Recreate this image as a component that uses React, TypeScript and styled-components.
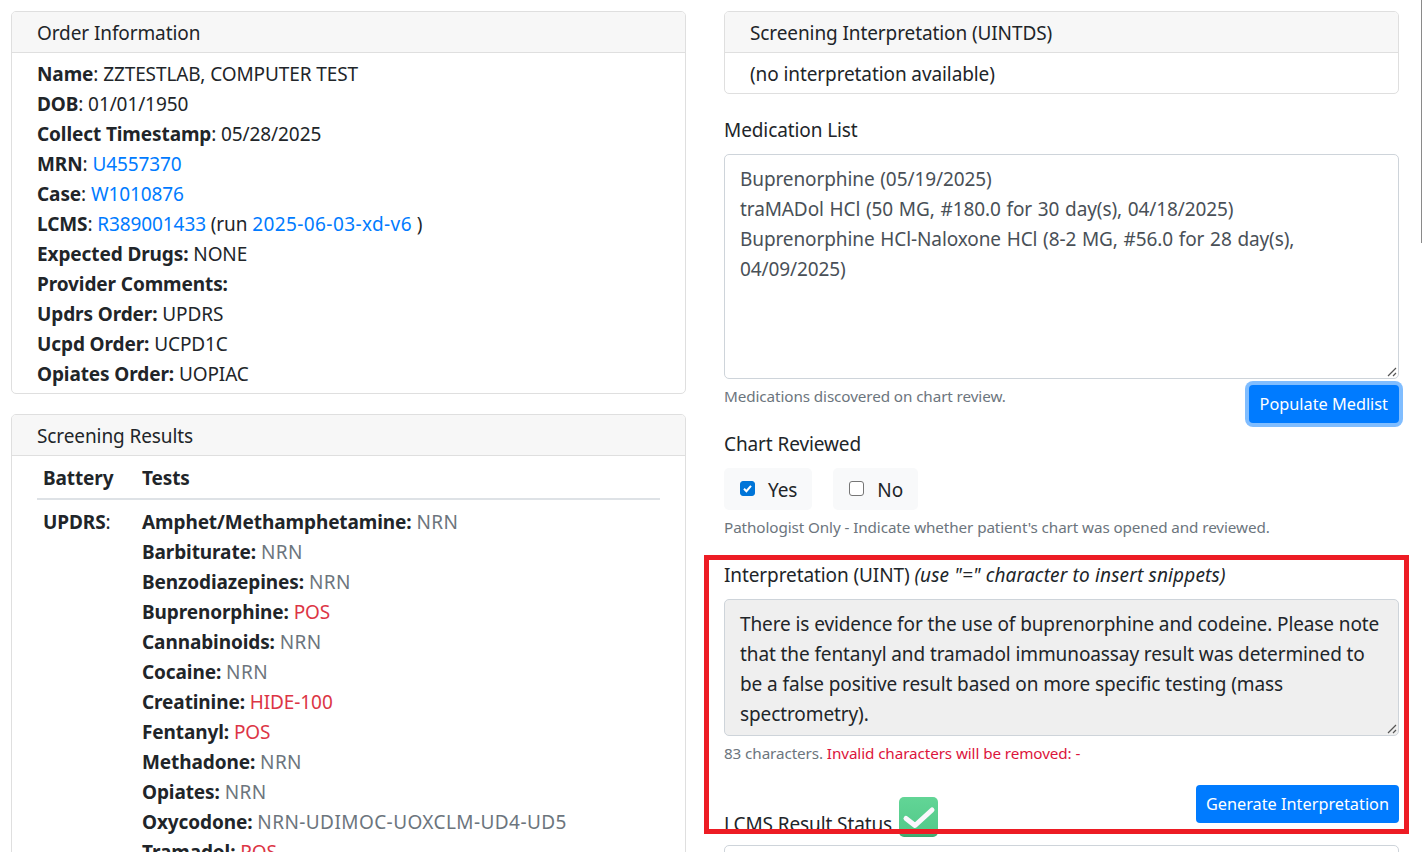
import React from 'react';
import styled, { createGlobalStyle } from 'styled-components';

const GlobalStyle = createGlobalStyle`
  html, body {
    margin: 0;
    height: 852px;
    overflow: hidden;
    background: #fff;
  }
  body {
    font-family: "Noto Sans", "Open Sans", sans-serif;
    font-size: 19px;
    line-height: 30px;
    letter-spacing: -0.1px;
    color: #212529;
  }
  * { box-sizing: border-box; }
`;

const Page = styled.div`
  display: grid;
  grid-template-columns: 675px 675px;
  column-gap: 38px;
  padding: 11px 0 0 11px;
  height: 852px;
  overflow: hidden;
`;

const Column = styled.div`
  display: flex;
  flex-direction: column;
`;

const Card = styled.section`
  border: 1px solid #dfdfdf;
  border-radius: 5px;
  margin-bottom: 20px;
`;

const CardHeader = styled.div`
  height: 41px;
  padding: 6px 25px 0;
  background: #f7f7f7;
  border-bottom: 1px solid #dfdfdf;
  border-radius: 4px 4px 0 0;
`;

const CardBody = styled.div<{ $flush?: boolean }>`
  padding: ${(p) => (p.$flush ? '7px 25px 0' : '6px 25px 4px')};
`;

const Row = styled.div`
  height: 30px;
  white-space: nowrap;
`;

const Link = styled.a`
  color: #007bff;
  text-decoration: none;
`;

const RunLink = styled(Link)`
  letter-spacing: 0.4px;
`;

const ResultGrid = styled.div`
  display: grid;
  grid-template-columns: 105px 1fr;
`;

const BatteryHead = styled.div<{ $first?: boolean }>`
  font-weight: 700;
  padding-left: ${(p) => (p.$first ? '6px' : '0')};
  height: 37px;
  border-bottom: 2px solid #dee2e6;
`;

const BatteryCell = styled.div`
  padding: 7px 0 0 6px;
`;

const TestList = styled.div`
  padding-top: 7px;
`;

const Muted = styled.span`
  color: #6c757d;
  letter-spacing: 0.42px;
`;

const Danger = styled.span`
  color: #dc3545;
`;

const FieldLabel = styled.div<{ $top?: number }>`
  height: 30px;
  margin-top: ${(p) => p.$top ?? 0}px;
  margin-bottom: 9px;
  white-space: nowrap;
`;

const SnippetHint = styled.i`
  letter-spacing: 0.16px;
`;

const TextBox = styled.div<{ $height: number; $filled?: boolean; $wordGap?: number }>`
  position: relative;
  height: ${(p) => p.$height}px;
  padding: 9px 15px;
  border: 1px solid #ced4da;
  border-radius: 5px;
  background: ${(p) => (p.$filled ? '#efefef' : '#fff')};
  color: ${(p) => (p.$filled ? '#212529' : '#495057')};
  word-spacing: ${(p) => p.$wordGap ?? 0}px;
`;

const Grip = styled.svg`
  position: absolute;
  right: 1px;
  bottom: 1px;
`;

const HelpRow = styled.div`
  display: flex;
  justify-content: space-between;
  align-items: flex-start;
`;

const Help = styled.div<{ $top: number }>`
  margin-top: ${(p) => p.$top}px;
  font-size: 15.25px;
  line-height: 24px;
  color: #6c757d;
  white-space: nowrap;
`;

const Invalid = styled.span`
  color: #dc143c;
`;

const Button = styled.button<{ $focused?: boolean; $top?: number }>`
  height: 38px;
  margin-top: ${(p) => p.$top ?? 0}px;
  padding: ${(p) => (p.$focused ? '0 11px' : '0 10px')};
  border: 0;
  border-radius: 4px;
  background: #007bff;
  color: #fff;
  font: inherit;
  font-size: 16.3px;
  white-space: nowrap;
  box-shadow: ${(p) => (p.$focused ? '0 0 0 4px #80bdff' : 'none')};
`;

const Choices = styled.div`
  display: flex;
  gap: 21px;
`;

const Choice = styled.label`
  display: flex;
  align-items: center;
  gap: 13px;
  height: 42px;
  padding: 2px 15px 0 16px;
  background: #f8f9fa;
  border-radius: 5px;
`;

const Box = styled.span<{ $checked?: boolean }>`
  display: flex;
  align-items: center;
  justify-content: center;
  width: 15px;
  height: 15px;
  margin-top: -3px;
  border-radius: 3px;
  background: ${(p) => (p.$checked ? '#0075d8' : '#fff')};
  border: 1px solid ${(p) => (p.$checked ? '#0075d8' : '#767676')};
`;

const StatusRow = styled.div`
  display: flex;
  align-items: flex-start;
  justify-content: space-between;
  height: 60px;
  margin-top: 20px;
`;

const StatusLabel = styled.div`
  display: flex;
  align-items: flex-end;
  gap: 7px;
  height: 52px;
  white-space: nowrap;
`;

const StatusText = styled.span`
  margin-bottom: -2px;
`;

const StatusIcon = styled.svg`
  flex: none;
`;

const Highlight = styled.div`
  position: absolute;
  left: 704px;
  top: 555px;
  width: 705px;
  height: 279px;
  border: 5px solid #ed1c24;
  pointer-events: none;
`;

const ScrollLine = styled.div`
  position: absolute;
  right: 0;
  top: 0;
  width: 1px;
  height: 243px;
  background: #8a8a8a;
`;

const tests: [string, string, boolean?][] = [
  ['Amphet/Methamphetamine', 'NRN'],
  ['Barbiturate', 'NRN'],
  ['Benzodiazepines', 'NRN'],
  ['Buprenorphine', 'POS', true],
  ['Cannabinoids', 'NRN'],
  ['Cocaine', 'NRN'],
  ['Creatinine', 'HIDE-100', true],
  ['Fentanyl', 'POS', true],
  ['Methadone', 'NRN'],
  ['Opiates', 'NRN'],
  ['Oxycodone', 'NRN-UDIMOC-UOXCLM-UD4-UD5'],
  ['Tramadol', 'POS', true],
];

const ResizeGrip = () => (
  <Grip width="11" height="11" viewBox="0 0 11 11">
    <path d="M2 10 L10 2 M7 10 L10 7" stroke="#555" strokeWidth="1.2" fill="none" />
  </Grip>
);

export default function App() {
  return (
    <>
      <GlobalStyle />
      <Page>
        <Column>
          <Card>
            <CardHeader>Order Information</CardHeader>
            <CardBody>
              <Row><b>Name</b>: ZZTESTLAB, COMPUTER TEST</Row>
              <Row><b>DOB</b>: 01/01/1950</Row>
              <Row><b>Collect Timestamp</b>: 05/28/2025</Row>
              <Row><b>MRN</b>: <Link href="#">U4557370</Link></Row>
              <Row><b>Case</b>: <Link href="#">W1010876</Link></Row>
              <Row><b>LCMS</b>: <Link href="#">R389001433</Link> (run <RunLink href="#">2025-06-03-xd-v6</RunLink> )</Row>
              <Row><b>Expected Drugs:</b> NONE</Row>
              <Row><b>Provider Comments:</b></Row>
              <Row><b>Updrs Order:</b> UPDRS</Row>
              <Row><b>Ucpd Order:</b> UCPD1C</Row>
              <Row><b>Opiates Order:</b> UOPIAC</Row>
            </CardBody>
          </Card>
          <Card>
            <CardHeader>Screening Results</CardHeader>
            <CardBody $flush>
              <ResultGrid>
                <BatteryHead $first>Battery</BatteryHead>
                <BatteryHead>Tests</BatteryHead>
                <BatteryCell><b>UPDRS</b>:</BatteryCell>
                <TestList>
                  {tests.map(([name, value, positive]) => (
                    <Row key={name}>
                      <b>{name}:</b>{' '}
                      {positive ? <Danger>{value}</Danger> : <Muted>{value}</Muted>}
                    </Row>
                  ))}
                </TestList>
              </ResultGrid>
            </CardBody>
          </Card>
        </Column>
        <Column>
          <Card>
            <CardHeader>Screening Interpretation (UINTDS)</CardHeader>
            <CardBody>(no interpretation available)</CardBody>
          </Card>
          <FieldLabel $top={1}>Medication List</FieldLabel>
          <TextBox $height={225} $wordGap={0.9}>
            Buprenorphine (05/19/2025)<br />
            traMADol HCl (50 MG, #180.0 for 30 day(s), 04/18/2025)<br />
            Buprenorphine HCl-Naloxone HCl (8-2 MG, #56.0 for 28 day(s),<br />
            04/09/2025)
            <ResizeGrip />
          </TextBox>
          <HelpRow>
            <Help $top={5}>Medications discovered on chart review.</Help>
            <Button $focused $top={6}>Populate Medlist</Button>
          </HelpRow>
          <FieldLabel $top={6}>Chart Reviewed</FieldLabel>
          <Choices>
            <Choice>
              <Box $checked>
                <svg width="11" height="11" viewBox="0 0 11 11">
                  <path d="M2 5.8 L4.4 8.2 L9 2.8" stroke="#fff" strokeWidth="2" fill="none" />
                </svg>
              </Box>
              Yes
            </Choice>
            <Choice>
              <Box />
              No
            </Choice>
          </Choices>
          <Help $top={5}>Pathologist Only - Indicate whether patient's chart was opened and reviewed.</Help>
          <FieldLabel $top={21}>
            Interpretation (UINT) <SnippetHint>(use "=" character to insert snippets)</SnippetHint>
          </FieldLabel>
          <TextBox $height={137} $filled>
            There is evidence for the use of buprenorphine and codeine. Please note<br />
            that the fentanyl and tramadol immunoassay result was determined to<br />
            be a false positive result based on more specific testing (mass<br />
            spectrometry).
            <ResizeGrip />
          </TextBox>
          <Help $top={5}>
            83 characters. <Invalid>Invalid characters will be removed: -</Invalid>
          </Help>
          <StatusRow>
            <StatusLabel>
              <StatusText>LCMS Result Status</StatusText>
              <StatusIcon width="39" height="40" viewBox="0 0 39 40">
                <defs>
                  <linearGradient id="statusFill" x1="0" y1="0" x2="0" y2="1">
                    <stop offset="0" stopColor="#62d596" />
                    <stop offset="0.8" stopColor="#54cb8b" />
                    <stop offset="1" stopColor="#3aa56c" />
                  </linearGradient>
                </defs>
                <rect x="0" y="0" width="39" height="40" rx="5" fill="url(#statusFill)" />
                <path
                  d="M7 21.5 L16 28.5 L33 13"
                  stroke="#fbf7fd"
                  strokeWidth="5"
                  strokeLinecap="round"
                  strokeLinejoin="round"
                  fill="none"
                />
              </StatusIcon>
            </StatusLabel>
            <Button>Generate Interpretation</Button>
          </StatusRow>
          <TextBox $height={60} />
        </Column>
      </Page>
      <Highlight />
      <ScrollLine />
    </>
  );
}
